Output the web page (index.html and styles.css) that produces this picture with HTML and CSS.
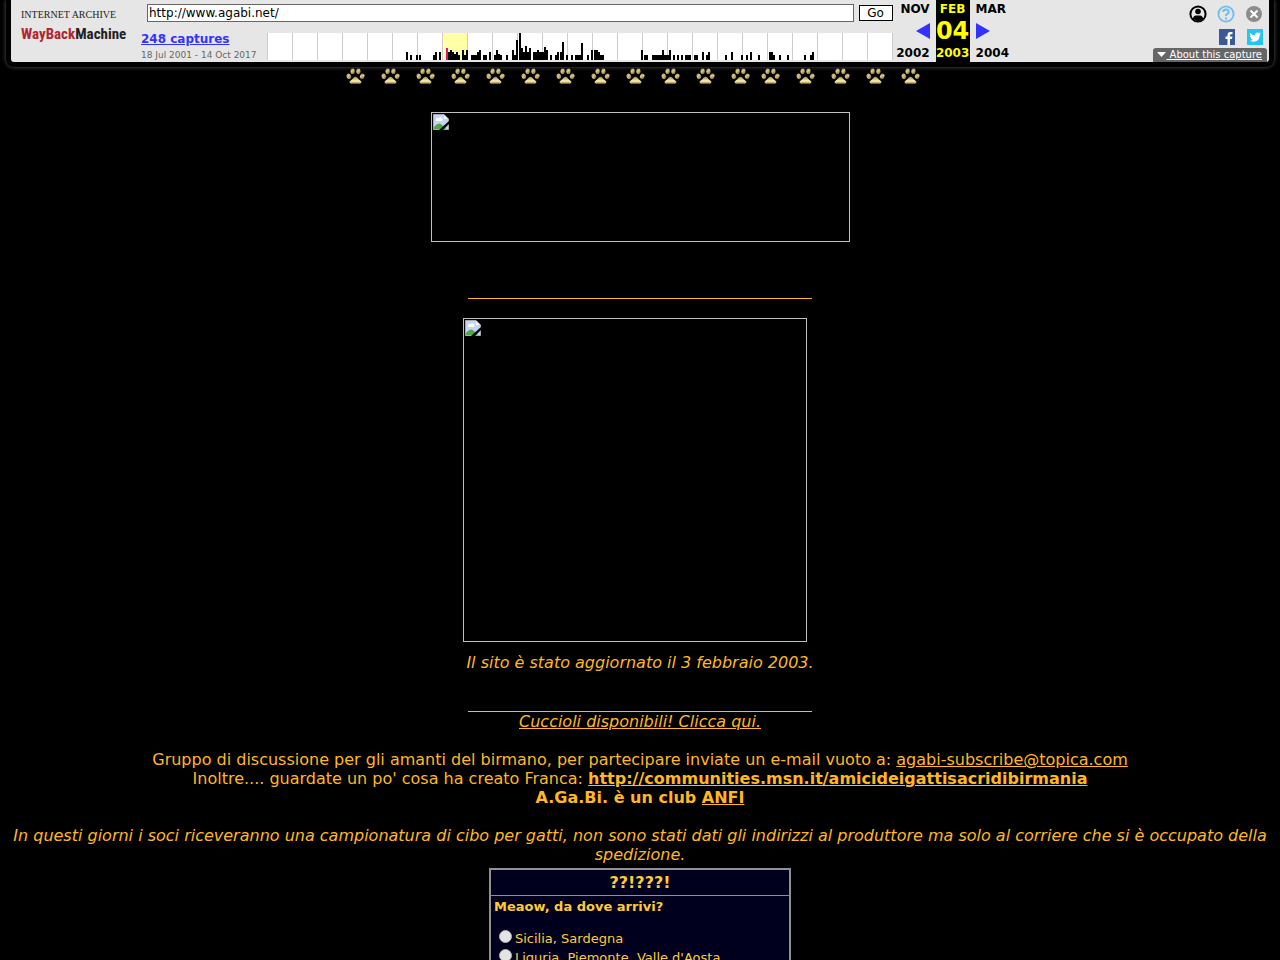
FILE: index.html
```html
<!DOCTYPE html>
<html lang="it">
<head>
<meta charset="utf-8">
<title>A.Ga.Bi.</title>
<link rel="stylesheet" href="styles.css">
</head>
<body>
<svg class="defs" width="0" height="0" aria-hidden="true">
  <defs>
    <linearGradient id="gold" x1="0" y1="0" x2="0.6" y2="1"><stop offset="0" stop-color="#7d6c3c"/><stop offset="0.5" stop-color="#dcca8c"/><stop offset="1" stop-color="#937b38"/></linearGradient>
    <linearGradient id="pad" x1="0" y1="0" x2="0" y2="1"><stop offset="0" stop-color="#a08a4c"/><stop offset="0.6" stop-color="#fff2b8"/><stop offset="1" stop-color="#94742c"/></linearGradient>
    <symbol id="paw" viewBox="0 0 19 17">
      <g fill="url(#gold)"><ellipse cx="6.600" cy="3.300" rx="2.100" ry="2.800"/><ellipse cx="12.400" cy="3.300" rx="2.100" ry="2.800"/><ellipse cx="2.800" cy="8.300" rx="2.200" ry="2.800" transform="rotate(-25 2.800 8.300)"/><ellipse cx="16.200" cy="8.300" rx="2.200" ry="2.800" transform="rotate(25 16.200 8.300)"/></g>
      <path fill="url(#pad)" d="M9.500 8.800C11.500 8.800 12 11.200 14.500 12.800C16.500 14.300 15 16.300 12.500 15.800H6.500C4 16.300 2.500 14.300 4.500 12.800C7 11.200 7.500 8.800 9.500 8.800Z"/>
    </symbol>
    <symbol id="broken" viewBox="0 0 16 16">
      <path fill="#c3d5f4" stroke="#a4a9b5" d="M.5.5H11L15.500 5V15.500H.5Z"/>
      <path fill="#fff" d="M3 6a2 2 0 0 1 3-2a2 2 0 0 1 3 3H3ZM11 1v4h4Z"/>
      <path fill="#4fa844" d="M1 15V13Q6 7 9 11L13 15Z"/>
      <path fill="#000" d="M6 16L16 7V10L10 16Z"/>
    </symbol>
  </defs>
</svg>
<header class="toolbar">
  <a class="logo" href="#"><span class="logo-top">INTERNET ARCHIVE</span><span class="logo-name"><span class="red">WayBack</span>Machine</span></a>
  <div class="middle">
    <form class="search">
      <input class="url" type="text" aria-label="URL" value="http://www.agabi.net/">
      <button class="go" type="button">Go</button>
    </form>
    <div class="history">
      <div class="captures"><a href="#">248 captures</a><span>18 Jul 2001 - 14 Oct 2017</span></div>
      <svg class="spark" viewBox="0 0 626 27" shape-rendering="crispEdges" role="img" aria-label="Captures by year">
        <path fill="#fff" d="M0 0h626v27H0z"/><path fill="#ffffa5" d="M176 0h24v27h-24z"/>
        <path stroke="#ccc" d="M.5 0v27M25.500 0v27M50.500 0v27M75.500 0v27M100.500 0v27M125.500 0v27M150.500 0v27M175.500 0v27M200.500 0v27M225.500 0v27M250.500 0v27M275.500 0v27M300.500 0v27M325.500 0v27M350.500 0v27M375.500 0v27M400.500 0v27M425.500 0v27M450.500 0v27M475.500 0v27M500.500 0v27M525.500 0v27M550.500 0v27M575.500 0v27M600.500 0v27M625.500 0v27"/>
        <path fill="#e0107c" d="M179 27v-12h2v12z"/>
        <path fill="#000" d="M139 27v-8h2v8zM143 27v-5h2v5zM149 27v-5h2v5zM152 27v-5h2v5zM166 27v-5h2v-3h2v8zM172 27v-8h2v8zM181 27v-8h2v-2h2v2h2v2h2v-2h2v3h2v5zM195 27v-10h2v5h2v-5h2v10zM204 27v-5h6v-3h2v-2h2v10zM216 27v-5h4v5zM222 27v-8h2v8zM227 27v-5h2v-5h2v4h2v1h2v5zM239 27v-5h2v5zM245 27v-10h2v5h2v-15h2v20zM252 27v-27h2v15h2v4h2v-6h2v6h2v-4h2v12zM266 27v-8h4v-2h2v2h5v-5h2v3h2v10zM283 27v-5h2v5zM288 27v-5h2v-3h2v8zM293 27v-8h2v-10h2v18zM299 27v-5h2v5zM304 27v-5h2v5zM308 27v-5h6v-12h2v17zM320 27v-5h2v5zM324 27v-10h2v10zM327 27v-10h4v2h2v3h4v5zM374 27v-10h2v10zM377 27v-5h4v5zM385 27v-5h10v-5h2v5h5v-5h2v10zM406 27v-5h2v5zM410 27v-5h2v5zM414 27v-5h2v5zM418 27v-5h6v5zM427 27v-5h4v5zM435 27v-8h2v8zM439 27v-5h2v-3h2v8zM458 27v-5h2v5zM464 27v-8h2v8zM474 27v-5h2v5zM479 27v-5h2v5zM483 27v-8h2v8zM491 27v-5h2v5zM502 27v-8h4v3h2v5zM512 27v-5h2v5zM520 27v-5h2v5zM537 27v-5h2v5zM543 27v-5h2v-3h2v8z"/>
      </svg>
    </div>
  </div>
  <nav class="dates">
    <div class="date prev"><b>NOV</b><svg width="14" height="16"><path fill="#33f" d="M14 0v16L0 8z"/></svg><b>2002</b></div>
    <div class="date now"><b>FEB</b><b class="day">04</b><b>2003</b></div>
    <div class="date next"><b>MAR</b><svg width="14" height="16"><path fill="#33f" d="M0 0v16l14-8z"/></svg><b>2004</b></div>
  </nav>
  <div class="tools">
    <div class="icons">
      <svg width="18" height="18" viewBox="0 0 18 18"><circle cx="9" cy="9" r="7.600" fill="none" stroke="#000" stroke-width="2"/><circle cx="9" cy="6.500" r="2.800" /><path d="M3.800 14Q4.300 10.400 7 10.400h4q2.700 0 3.200 3.600Q9 18 3.800 14z"/></svg>
      <svg width="18" height="18" viewBox="0 0 18 18"><circle cx="9" cy="9" r="7.600" fill="none" stroke="#6cbef0" stroke-width="1.800"/><path fill="none" stroke="#6cbef0" stroke-width="2" d="M6.200 7Q6.200 4.500 9 4.500T11.800 7Q11.800 8.300 10.200 9T9 11M9 12.500v2"/></svg>
      <svg width="18" height="18" viewBox="0 0 18 18"><circle cx="9" cy="9" r="8" fill="#8c8c8c"/><path stroke="#fff" stroke-width="2" d="M5.500 5.500l7 7m0-7l-7 7"/></svg>
    </div>
    <div class="icons social">
      <svg width="16" height="16"><path fill="#3b5998" d="M0 0h16v16H0z"/><path fill="#fff" d="M8.500 16V10H6.500V7.500h2V6Q8.500 3 11.500 3h2v2.300H12q-1 0-1 1v1.200h2.500L13 10H11v6z"/></svg>
      <svg width="18" height="16"><path fill="#26c4f1" d="M1 0h16v16H1z"/><path fill="#fff" d="M4 4q2 2.200 5 2.300Q9 3.500 11.300 3.400q1.200 0 1.800.7l1.700-.6-1 1.500 1.200-.2-1.200 1.300Q13.500 12.500 8 12.700q-2.300 0-4-1 2 0 3-1-1.800-.2-2.400-1.700h1.100Q3.800 8.200 3.800 6.500l1 .2Q3.200 5.500 4 4z"/></svg>
    </div>
    <button class="about" type="button"><svg width="9" height="6"><path fill="#fff" d="M0 0h9L4.500 5z"/></svg><span>&nbsp;About this capture</span></button>
  </div>
</header>
<main>
  <div class="paws">
    <div class="paw-group"><svg><use href="#paw"/></svg><svg><use href="#paw"/></svg><svg><use href="#paw"/></svg><svg><use href="#paw"/></svg><svg><use href="#paw"/></svg><svg><use href="#paw"/></svg><svg><use href="#paw"/></svg><svg><use href="#paw"/></svg><svg><use href="#paw"/></svg><svg><use href="#paw"/></svg><svg><use href="#paw"/></svg><svg><use href="#paw"/></svg></div>
    <div class="paw-group"><svg><use href="#paw"/></svg><svg><use href="#paw"/></svg><svg><use href="#paw"/></svg><svg><use href="#paw"/></svg><svg><use href="#paw"/></svg></div>
  </div>
  <div class="picture banner"><svg width="16" height="16"><use href="#broken"/></svg></div>
  <hr class="rule">
  <div class="picture photo"><svg width="16" height="16"><use href="#broken"/></svg></div>
  <p class="updated"><i>Il sito è stato aggiornato il 3 febbraio 2003.</i></p>
  <hr class="rule">
  <p><a href="#"><i>Cuccioli disponibili! Clicca qui.</i></a></p>
  <p class="spaced">Gruppo di discussione per gli amanti del birmano, per partecipare inviate un e-mail vuoto a: <a href="#">agabi-subscribe@topica.com</a><br>
  Inoltre.... guardate un po' cosa ha creato Franca: <a href="#"><b>http://communities.msn.it/amicideigattisacridibirmania</b></a><br>
  <b>A.Ga.Bi. è un club <a href="#">ANFI</a></b></p>
  <p class="spaced"><i>In questi giorni i soci riceveranno una campionatura di cibo per gatti, non sono stati dati gli indirizzi al produttore ma solo al corriere che si è occupato della spedizione.</i></p>
  <form class="poll">
    <h2>??!???!</h2>
    <fieldset>
      <legend>Meaow, da dove arrivi?</legend>
      <label><input type="radio" name="from">Sicilia, Sardegna</label>
      <label><input type="radio" name="from">Liguria, Piemonte, Valle d'Aosta</label>
    </fieldset>
  </form>
</main>
</body>
</html>
```
FILE: styles.css
```css
* { box-sizing: border-box; }
body {
  margin: 0;
  height: 100vh;
  overflow: hidden;
  background: #000;
  color: #ffb820;
  font: 16px/19px "DejaVu Sans", sans-serif;
}
a { color: inherit; }
p { margin: 0; }
svg { display: block; flex: none; }
.defs { position: absolute; }

.toolbar {
  display: flex;
  height: 67px;
  margin: 0 6px;
  padding-left: 10px;
  background: #e6e6e6;
  color: #000;
  border: solid #000;
  border-width: 0 5px 5px;
  border-radius: 0 0 8px 8px;
  box-shadow: 0 0 4px #555;
  font-size: 12px;
  line-height: 14px;
}
.logo {
  width: 120px;
  padding-top: 9px;
  color: #222;
  text-decoration: none;
}
.logo span { display: block; }
.logo-top { font: 10px/11px "Liberation Serif", serif; white-space: nowrap; }
.logo-name { font: bold 15px/28px "Roboto Condensed", "Liberation Sans Narrow", sans-serif; white-space: nowrap; }
.logo .red { display: inline; color: #b0252f; }
.middle { flex: 1; min-width: 0; }
.search { display: flex; gap: 5px; margin: 4px 0 0 6px; align-items: center; }
.url {
  flex: 1;
  min-width: 0;
  height: 18px;
  padding: 0 1px;
  border: 1px solid #666;
  background: #fff;
  font: 12px "DejaVu Sans", sans-serif;
}
.go {
  width: 34px;
  height: 16px;
  padding: 0;
  border: 1px solid #000;
  background: #fff;
  color: #000;
  font: 12px/14px "DejaVu Sans", sans-serif;
}
.history { display: flex; margin-top: 11px; }
.captures { flex: none; width: 126px; white-space: nowrap; }
.captures a { display: block; margin-bottom: 3px; line-height: 13px; color: #33f; font-weight: bold; }
.captures span { display: block; font-size: 9px; line-height: 12px; color: #666; }
.spark { flex: 1; min-width: 0; height: 27px; }

.dates { display: flex; gap: 6px; margin-left: 4px; }
.date { display: flex; flex-direction: column; justify-content: space-between; height: 62px; padding: 2px 0; }
.prev { width: 33px; align-items: flex-end; }
.now { width: 34px; align-items: center; background: #000; color: #ff0; }
.day { font-size: 24px; line-height: 24px; }
.next { align-items: flex-start; }

.tools {
  display: flex;
  flex-direction: column;
  align-items: flex-end;
  width: 260px;
  padding: 5px 2px 0 0;
}
.icons { display: flex; gap: 10px; margin: 0 4px 6px 0; }
.social { margin: 0 3px 3px 0; gap: 11px; }
.about {
  display: flex;
  align-items: center;
  height: 14px;
  padding: 0 5px 0 4px;
  border: 0;
  border-radius: 3px 3px 0 0;
  background: #666;
  color: #fff;
  font: 10px/14px "DejaVu Sans", sans-serif;
  text-decoration: underline;
  white-space: nowrap;
}

main { display: flex; flex-direction: column; align-items: center; text-align: center; }
.paws { display: flex; gap: 11px; margin: 1px 14px 27px 0; }
.paw-group { display: flex; gap: 16px; }
.paws svg { width: 19px; height: 17px; }
.picture { padding: 1px; border: 1px solid #c0c0c0; }
.banner { width: 419px; height: 130px; margin-bottom: 56px; }
.photo { width: 344px; height: 324px; margin: 19px 10px 11px 0; }
.rule { width: 344px; height: 1px; margin: 0; border: 0; background: #ffb820; }
.updated { margin-bottom: 39px; }
.spaced { margin-top: 19px; }
main > p { padding: 0 8px; }

.poll {
  width: 302px;
  margin-top: 4px;
  border: 2px solid #909090;
  background: #00001e;
  color: #ffcc33;
  font-size: 13px;
  text-align: left;
}
.poll h2 { margin: 0; border-bottom: 1px solid #909090; font-size: 16px; line-height: 25px; text-align: center; }
.poll fieldset { margin: 0; padding: 3px; border: 0; }
.poll legend { float: left; width: 100%; margin-bottom: 13px; padding: 0; line-height: 16px; font-weight: bold; }
.poll label { display: flex; clear: both; gap: 3px; height: 19px; line-height: 21px; }
.poll input {
  appearance: none;
  width: 13px;
  height: 13px;
  margin: 2px 0 0 5px;
  border: 1px solid #b4b4b4;
  border-radius: 50%;
  background: #e4e4e4;
}
.poll input:checked { background: radial-gradient(#333 3px, #e4e4e4 4px); }
```
